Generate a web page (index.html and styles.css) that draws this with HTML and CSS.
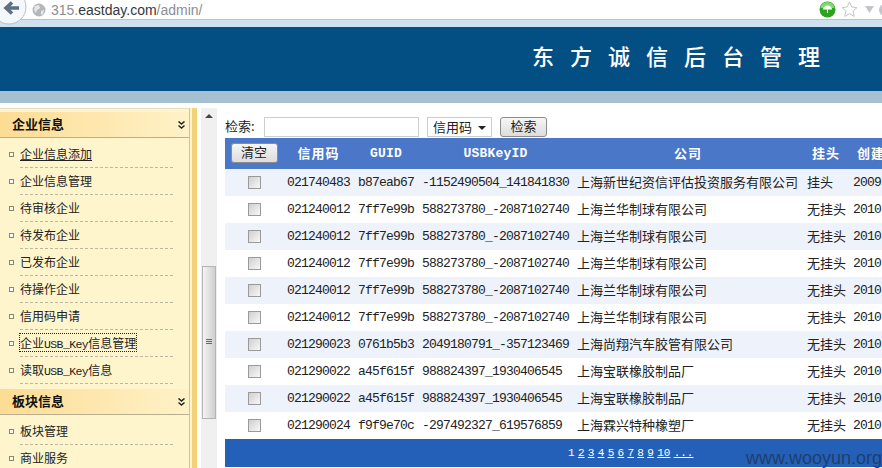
FILE: index.html
```html
<!DOCTYPE html>
<html lang="zh-CN">

<head>
    <meta charset="UTF-8">
    <title>东方诚信后台管理</title>
    <link rel="stylesheet" href="styles.css">
</head>

<body>
    <div class="toolbar">
        <svg class="back" width="28" height="25" viewBox="0 0 28 25">
            <circle cx="9" cy="7" r="17" fill="#f4f7fb" stroke="#b4c0cf"/>
            <path d="M6 8h13M12 2.500L6 8l6 5.500" fill="none" stroke="#5d6f80" stroke-width="3.500"/>
        </svg>
        <svg class="globe" width="14" height="14" viewBox="0 0 14 14">
            <circle cx="7" cy="7" r="6.500" fill="#b5b8bb"/>
            <path d="M3 3l4-1 1 3-3 2-1 3-2-3zM9 8l3-1-1 4-2 1z" fill="#e6e7e8"/>
        </svg>
        <div class="url">315.<b>eastday.com</b>/admin/</div>
        <svg class="umbrella" width="17" height="17" viewBox="0 0 17 17">
            <circle cx="8.500" cy="8.500" r="8" fill="#2ea31f"/>
            <path d="M1.500 7a7 6 0 0 1 14 0z" fill="#7fd96b"/>
            <path d="M4 8.500a4.500 4 0 0 1 9 0zM8 8h1v4H8z" fill="#fff"/>
        </svg>
        <svg class="star" width="17" height="17" viewBox="0 0 17 17">
            <path d="M8.500 1l2.300 5 5.200.6-3.900 3.500 1.100 5.300-4.700-2.700-4.700 2.700 1.100-5.300L1 6.600 6.200 6z" fill="#fff" stroke="#c3c6c9"/>
        </svg>
        <svg class="arrow" width="9" height="7" viewBox="0 0 9 7">
            <path d="M0 0h9L4.500 7z" fill="#c2c6ca"/>
        </svg>
        <div class="more"></div>
    </div>

    <div class="banner">
        <h1>东方诚信后台管理</h1>
    </div>
    <div class="strip"></div>

    <div class="main">
        <div class="sidebar">
            <div class="side-panel">
                <div class="side-head first">企业信息
                    <svg class="chev" width="7" height="8" viewBox="0 0 7 8"><path d="M.5.500l3 2.500 3-2.500M.5 4.500l3 2.500 3-2.500" fill="none" stroke="#222" stroke-width="1.500"/></svg>
                </div>
                <ul>
                    <li><a class="hover">企业信息添加</a></li>
                    <li><a>企业信息管理</a></li>
                    <li><a>待审核企业</a></li>
                    <li><a>待发布企业</a></li>
                    <li><a>已发布企业</a></li>
                    <li><a>待操作企业</a></li>
                    <li><a>信用码申请</a></li>
                    <li><a class="focus">企业<span class="latin">USB_Key</span>信息管理</a></li>
                    <li><a>读取<span class="latin">USB_Key</span>信息</a></li>
                </ul>
                <div class="side-head">板块信息
                    <svg class="chev" width="7" height="8" viewBox="0 0 7 8"><path d="M.5.500l3 2.500 3-2.500M.5 4.500l3 2.500 3-2.500" fill="none" stroke="#222" stroke-width="1.500"/></svg>
                </div>
                <ul>
                    <li><a>板块管理</a></li>
                    <li><a>商业服务</a></li>
                </ul>
            </div>
            <div class="side-band"></div>
        </div>

        <div class="scrollbar">
            <div class="up"></div>
            <div class="thumb"><div class="grip"></div></div>
        </div>

        <div class="content">
            <div class="search">
                <label>检索:</label>
                <input class="search-input" type="text">
                <div class="search-type">信用码</div>
                <button class="btn search-btn">检索</button>
            </div>

            <table class="grid">
                <colgroup>
                    <col class="c1"><col class="c2"><col class="c3"><col class="c4"><col class="c5"><col class="c6"><col class="c7">
                </colgroup>
                <thead>
                    <tr>
                        <th><button class="btn">清空</button></th>
                        <th>信用码</th>
                        <th class="en">GUID</th>
                        <th class="en">USBKeyID</th>
                        <th>公司</th>
                        <th>挂头</th>
                        <th>创建时间</th>
                    </tr>
                </thead>
                <tbody>
                    <tr><td class="chk"><input type="checkbox"></td><td class="num">021740483</td><td class="num">b87eab67</td><td class="num">-1152490504_141841830</td><td>上海新世纪资信评估投资服务有限公司</td><td>挂头</td><td class="num">2009-</td></tr>
                    <tr><td class="chk"><input type="checkbox"></td><td class="num">021240012</td><td class="num">7ff7e99b</td><td class="num">588273780_-2087102740</td><td>上海兰华制球有限公司</td><td>无挂头</td><td class="num">2010-</td></tr>
                    <tr><td class="chk"><input type="checkbox"></td><td class="num">021240012</td><td class="num">7ff7e99b</td><td class="num">588273780_-2087102740</td><td>上海兰华制球有限公司</td><td>无挂头</td><td class="num">2010-</td></tr>
                    <tr><td class="chk"><input type="checkbox"></td><td class="num">021240012</td><td class="num">7ff7e99b</td><td class="num">588273780_-2087102740</td><td>上海兰华制球有限公司</td><td>无挂头</td><td class="num">2010-</td></tr>
                    <tr><td class="chk"><input type="checkbox"></td><td class="num">021240012</td><td class="num">7ff7e99b</td><td class="num">588273780_-2087102740</td><td>上海兰华制球有限公司</td><td>无挂头</td><td class="num">2010-</td></tr>
                    <tr><td class="chk"><input type="checkbox"></td><td class="num">021240012</td><td class="num">7ff7e99b</td><td class="num">588273780_-2087102740</td><td>上海兰华制球有限公司</td><td>无挂头</td><td class="num">2010-</td></tr>
                    <tr><td class="chk"><input type="checkbox"></td><td class="num">021290023</td><td class="num">0761b5b3</td><td class="num">2049180791_-357123469</td><td>上海尚翔汽车胶管有限公司</td><td>无挂头</td><td class="num">2010-</td></tr>
                    <tr><td class="chk"><input type="checkbox"></td><td class="num">021290022</td><td class="num">a45f615f</td><td class="num">988824397_1930406545</td><td>上海宝联橡胶制品厂</td><td>无挂头</td><td class="num">2010-</td></tr>
                    <tr><td class="chk"><input type="checkbox"></td><td class="num">021290022</td><td class="num">a45f615f</td><td class="num">988824397_1930406545</td><td>上海宝联橡胶制品厂</td><td>无挂头</td><td class="num">2010-</td></tr>
                    <tr><td class="chk"><input type="checkbox"></td><td class="num">021290024</td><td class="num">f9f9e70c</td><td class="num">-297492327_619576859</td><td>上海霖兴特种橡塑厂</td><td>无挂头</td><td class="num">2010-</td></tr>
                </tbody>
            </table>

            <div class="pager">
                <span>1</span><a>2</a><a>3</a><a>4</a><a>5</a><a>6</a><a>7</a><a>8</a><a>9</a><a>10</a><a>...</a>
            </div>
        </div>
    </div>

    <div class="watermark">www.wooyun.org</div>
</body>

</html>
```

FILE: styles.css
```css
html,
body {
    margin: 0;
    height: 468px;
    overflow: hidden;
    background: #fff;
}

body {
    position: relative;
    font-family: "Noto Sans CJK SC", sans-serif;
    font-size: 12px;
    color: #222;
}

/* browser chrome */
.toolbar {
    height: 19px;
    display: flex;
    align-items: center;
    border-bottom: 1px solid #b9c3ce;
    position: relative;
}

.back {
    align-self: flex-start;
    flex: none;
}

.globe {
    flex: none;
    margin-left: 4px;
}

.url {
    flex: 1;
    margin-left: 5px;
    font-family: "Liberation Sans", sans-serif;
    font-size: 14px;
    color: #8a8f94;
    white-space: nowrap;
}

.url b {
    font-weight: 400;
    color: #33383c;
}

.umbrella {
    flex: none;
}

.star {
    flex: none;
    margin-left: 5px;
}

.arrow {
    flex: none;
    margin-left: 7px;
}

.more {
    width: 12px;
    height: 12px;
    margin-left: 5px;
    margin-right: -9px;
    border-radius: 50%;
    background: #c2c6ca;
    flex: none;
}

/* banner */
.banner {
    height: 64px;
    border-top: 7px solid #cfe0ee;
    background: #034f84;
    display: flex;
    align-items: center;
    justify-content: flex-end;
}

.banner h1 {
    margin: 0 46px 8px 0;
    font-size: 22px;
    font-weight: 500;
    letter-spacing: 16px;
    color: #fff;
    line-height: 30px;
}

.strip {
    height: 12px;
    background: #a6bfd1;
}

.main {
    display: flex;
    padding-top: 5px;
}

/* left menu */
.sidebar {
    width: 197px;
    flex: none;
    display: flex;
}

.side-panel {
    width: 189px;
    border-right: 1px solid #c9c3a8;
    border-top: 1px solid #e8dfc0;
    background: #fff5cd;
}

.side-band {
    width: 5px;
    border-left: 2px solid #fff5cd;
    background: #f4d27a;
}

.side-head {
    height: 25px;
    margin-top: 5px;
    padding-left: 12px;
    line-height: 23px;
    font-size: 13px;
    font-weight: 700;
    color: #111;
    background: linear-gradient(90deg, #fddc94, #fff2c8);
    border-bottom: 1px solid #b9ae90;
    position: relative;
}

.side-head.first {
    margin-top: 3px;
}

.chev {
    position: absolute;
    left: 178px;
    top: 9px;
}

.side-panel ul {
    margin: 0;
    padding: 3px 0 0;
    list-style: none;
}

.side-panel li {
    height: 27px;
    margin-left: 20px;
    margin-right: 16px;
    line-height: 26px;
    border-bottom: 1px dashed #bdb9a0;
    box-sizing: border-box;
    position: relative;
}

.side-panel li::before {
    content: "";
    position: absolute;
    left: -11px;
    top: 11px;
    width: 3px;
    height: 3px;
    border: 1px solid #8b8a5c;
    background: #fff;
}

.side-panel a {
    color: #222;
}

.side-panel a.hover {
    text-decoration: underline;
}

.side-panel a.focus {
    outline: 1px dotted #222;
}

.latin {
    font-family: "Liberation Mono", monospace;
    font-size: 11.500px;
    letter-spacing: -.6px;
}

/* page scrollbar */
.scrollbar {
    width: 16px;
    height: 361px;
    margin-left: 4px;
    flex: none;
    background: #f0f0f0;
    position: relative;
}

.up {
    position: absolute;
    left: 4px;
    top: 6px;
    border: 4px solid transparent;
    border-top: 0;
    border-bottom: 4px solid #444;
}

.thumb {
    position: absolute;
    left: 1px;
    right: 1px;
    top: 158px;
    height: 153px;
    border: 1px solid #b4b4b4;
    box-sizing: border-box;
    background: linear-gradient(90deg, #f4f4f4, #cfcfcf);
}

.grip {
    position: absolute;
    left: 3px;
    top: 72px;
    width: 6px;
    height: 6px;
    background: repeating-linear-gradient(#666 0 1px, transparent 1px 2px);
}

/* list */
.content {
    flex: 1;
    min-width: 0;
    padding-left: 8px;
    overflow: hidden;
}

.search {
    height: 30px;
    box-sizing: border-box;
    padding-top: 9px;
    display: flex;
    align-items: flex-start;
    font-size: 13px;
}

.search label {
    width: 39px;
    line-height: 18px;
    flex: none;
}

.search-input {
    width: 155px;
    height: 20px;
    padding: 0;
    box-sizing: border-box;
    border: 1px solid #c9ced3;
    flex: none;
}

.search-type {
    width: 65px;
    height: 20px;
    margin-left: 8px;
    padding-left: 5px;
    box-sizing: border-box;
    flex: none;
    line-height: 17px;
    border: 1px solid #c9ced3;
    position: relative;
}

.search-type::after {
    content: "";
    position: absolute;
    right: 5px;
    top: 8px;
    border: 4px solid transparent;
    border-bottom: 0;
    border-top: 4px solid #222;
}

.btn {
    width: 47px;
    height: 20px;
    padding: 0 0 2px;
    font: 13px/16px "Noto Sans CJK SC", sans-serif;
    color: #222;
    border: 1px solid #8c8c8c;
    border-radius: 3px;
    background: linear-gradient(#f6f6f6, #dcdcdc);
}

.search-btn {
    margin-left: 8px;
    flex: none;
}

.grid {
    table-layout: fixed;
    width: 696px;
    border-collapse: collapse;
}

.c1 { width: 58px; }
.c2 { width: 71px; }
.c3 { width: 64px; }
.c4 { width: 155px; }
.c5 { width: 230px; }
.c6 { width: 46px; }
.c7 { width: 72px; }

.grid th {
    height: 31px;
    box-sizing: border-box;
    padding: 0 0 2px;
    background: #4a77c8;
    color: #fff;
    font-size: 13px;
    font-weight: 700;
    letter-spacing: 1px;
}

.grid th.en {
    padding: 0;
    font-family: "Liberation Mono", monospace;
    letter-spacing: .2px;
}

.grid td {
    height: 27px;
    box-sizing: border-box;
    padding: 0 0 2px 4px;
    font-size: 13px;
    white-space: nowrap;
    overflow: hidden;
}

.grid td.num {
    padding: 0 0 0 4px;
    font-family: "Liberation Mono", monospace;
    font-size: 13px;
    letter-spacing: -.8px;
}

.grid td.chk {
    padding: 0;
    text-align: center;
}

.grid tbody tr:nth-child(odd) {
    background: #edf2fb;
}

.chk input {
    appearance: none;
    display: block;
    width: 13px;
    height: 13px;
    margin: 0 auto;
    box-sizing: border-box;
    border: 1px solid #9a9a9a;
    background: linear-gradient(135deg, #cfcfcf, #f8f8f8);
}

.pager {
    width: 696px;
    height: 28px;
    box-sizing: border-box;
    padding-left: 343px;
    line-height: 28px;
    background: #2560b8;
    color: #fff;
    font-family: "Liberation Mono", monospace;
    font-size: 11px;
}

.pager span,
.pager a {
    margin-right: 3.300px;
}

.pager a {
    text-decoration: underline;
}

/* screenshot watermark */
.watermark {
    position: absolute;
    right: 0;
    bottom: 0;
    font-family: "Liberation Sans", sans-serif;
    font-size: 18px;
    line-height: 20px;
    color: #1d3f6c;
}
```
